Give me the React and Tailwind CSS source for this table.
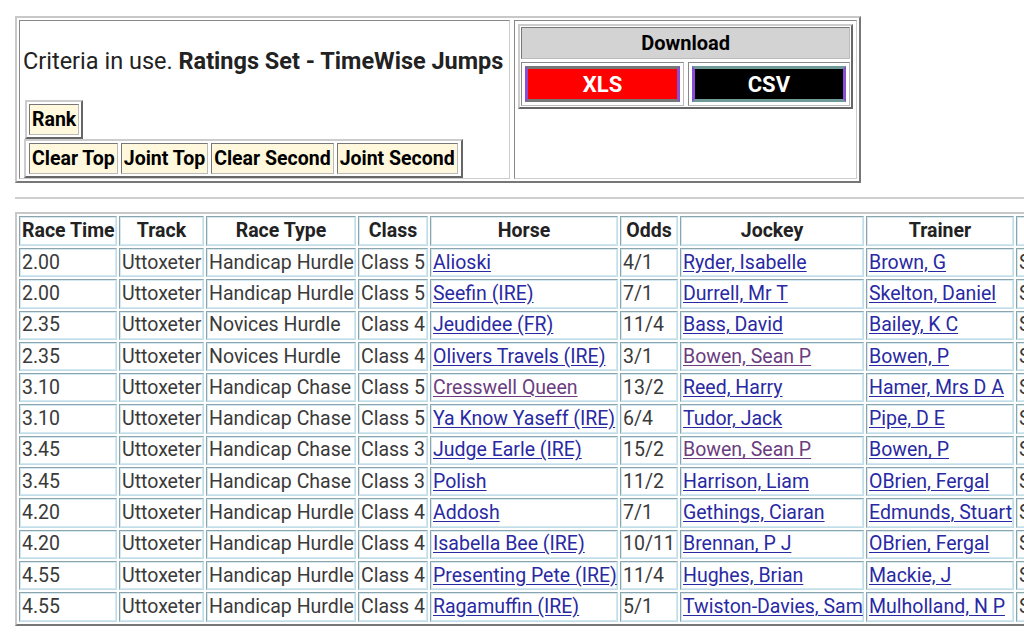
import React from 'react';

const rows = [
  ['2.00', 'Uttoxeter', 'Handicap Hurdle', 'Class 5', 'Alioski', '4/1', 'Ryder, Isabelle', 'Brown, G'],
  ['2.00', 'Uttoxeter', 'Handicap Hurdle', 'Class 5', 'Seefin (IRE)', '7/1', 'Durrell, Mr T', 'Skelton, Daniel'],
  ['2.35', 'Uttoxeter', 'Novices Hurdle', 'Class 4', 'Jeudidee (FR)', '11/4', 'Bass, David', 'Bailey, K C'],
  ['2.35', 'Uttoxeter', 'Novices Hurdle', 'Class 4', 'Olivers Travels (IRE)', '3/1', 'Bowen, Sean P', 'Bowen, P'],
  ['3.10', 'Uttoxeter', 'Handicap Chase', 'Class 5', 'Cresswell Queen', '13/2', 'Reed, Harry', 'Hamer, Mrs D A'],
  ['3.10', 'Uttoxeter', 'Handicap Chase', 'Class 5', 'Ya Know Yaseff (IRE)', '6/4', 'Tudor, Jack', 'Pipe, D E'],
  ['3.45', 'Uttoxeter', 'Handicap Chase', 'Class 3', 'Judge Earle (IRE)', '15/2', 'Bowen, Sean P', 'Bowen, P'],
  ['3.45', 'Uttoxeter', 'Handicap Chase', 'Class 3', 'Polish', '11/2', 'Harrison, Liam', 'OBrien, Fergal'],
  ['4.20', 'Uttoxeter', 'Handicap Hurdle', 'Class 4', 'Addosh', '7/1', 'Gethings, Ciaran', 'Edmunds, Stuart'],
  ['4.20', 'Uttoxeter', 'Handicap Hurdle', 'Class 4', 'Isabella Bee (IRE)', '10/11', 'Brennan, P J', 'OBrien, Fergal'],
  ['4.55', 'Uttoxeter', 'Handicap Hurdle', 'Class 4', 'Presenting Pete (IRE)', '11/4', 'Hughes, Brian', 'Mackie, J'],
  ['4.55', 'Uttoxeter', 'Handicap Hurdle', 'Class 4', 'Ragamuffin (IRE)', '5/1', 'Twiston-Davies, Sam', 'Mulholland, N P'],
];

const visited = ['Bowen, Sean P', 'Cresswell Queen'];

const headers = [
  ['Race Time', 'w-[98px]'],
  ['Track', 'w-[85px]'],
  ['Race Type', 'w-[150px]'],
  ['Class', 'w-[70px]'],
  ['Horse', 'w-[188px]'],
  ['Odds', 'w-[58px]'],
  ['Jockey', 'w-[184px]'],
  ['Trainer', 'w-[148px]'],
  ['Selection', 'w-[120px]'],
];

const cell =
  'border border-t-[#8fa3aa] border-l-[#8fa3aa] border-r-[#c3dde8] border-b-[#c3dde8] shadow-[inset_0_0_0_1px_#d3e9f2]';

const Link = ({ children }) => (
  <a
    href="#"
    className={
      'underline underline-offset-2 ' +
      (visited.includes(children) ? 'text-[#6b3d80]' : 'text-[#2929a3]')
    }
  >
    {children}
  </a>
);

const Btn = ({ children }) => (
  <td className="bg-[#fff8dc] border border-t-[#777] border-l-[#777] border-r-[#bbb] border-b-[#bbb] px-[2px] py-[3px] font-bold text-[19.5px] leading-[23px] text-black whitespace-nowrap">
    {children}
  </td>
);

export default function App() {
  return (
    <div className="w-[1024px] h-[641px] overflow-hidden bg-white font-['Roboto',sans-serif] text-[#222]">
      <div className="pt-4 pl-[15px]">
        <div className="flex gap-[4px] w-[846px] h-[167px] p-[2px] border-2 border-t-[#c8c8c8] border-l-[#c8c8c8] border-r-[#777] border-b-[#777]">
          <div className="w-[492px] h-full border border-t-[#888] border-l-[#888] border-r-[#ccc] border-b-[#ccc] pl-[3px] flex flex-col">
            <p className="mt-[26px] text-[23.5px] leading-[28px] whitespace-nowrap">
              Criteria in use. <b>Ratings Set - TimeWise Jumps</b>
            </p>
            <table className="mt-[25px] ml-[2px] border-separate border-spacing-[2px] border-2 border-t-[#ccc] border-l-[#ccc] border-r-[#666] border-b-[#666] w-fit">
              <tbody>
                <tr>
                  <Btn>Rank</Btn>
                </tr>
              </tbody>
            </table>
            <table className="ml-[1px] border-separate border-spacing-x-[3px] border-spacing-y-[2px] border-2 border-t-[#ccc] border-l-[#ccc] border-r-[#666] border-b-[#666] w-fit">
              <tbody>
                <tr>
                  <Btn>Clear Top</Btn>
                  <Btn>Joint Top</Btn>
                  <Btn>Clear Second</Btn>
                  <Btn>Joint Second</Btn>
                </tr>
              </tbody>
            </table>
          </div>
          <div className="w-[343px] h-full border border-t-[#888] border-l-[#888] border-r-[#ccc] border-b-[#ccc] p-[3px]">
            <div className="border-2 border-t-[#ccc] border-l-[#ccc] border-r-[#666] border-b-[#666] p-[1px] flex flex-col gap-[3px]">
              <div className="h-[32px] bg-[#d3d3d3] border border-t-[#777] border-l-[#777] border-r-[#bbb] border-b-[#bbb] flex items-center justify-center font-bold text-[20px] text-black">
                Download
              </div>
              <div className="flex gap-[4px]">
                <div className="flex-1 h-[44px] border border-t-[#888] border-l-[#888] border-r-[#bbb] border-b-[#bbb] p-[3px]">
                  <div className="h-full bg-[#ff0000] border-[3px] border-t-[#777] border-b-[#777] border-l-[#8a4fd0] border-r-[#8a4fd0] flex items-center justify-center font-bold text-[22px] text-white">
                    XLS
                  </div>
                </div>
                <div className="flex-1 h-[44px] border border-t-[#888] border-l-[#888] border-r-[#bbb] border-b-[#bbb] p-[3px]">
                  <div className="h-full bg-black border-[3px] border-t-[#6f9a98] border-b-[#6f9a98] border-l-[#8a4fd0] border-r-[#8a4fd0] flex items-center justify-center font-bold text-[22px] text-white">
                    CSV
                  </div>
                </div>
              </div>
            </div>
          </div>
        </div>
      </div>

      <div className="mt-[14px] ml-[15px] border-t-2 border-[#cfcfcf]" />

      <div className="mt-[13px] ml-[15px]">
        <table className="table-fixed w-[1125px] border-separate border-spacing-[2px] border-2 border-t-[#c8c8c8] border-l-[#c8c8c8] border-r-[#777] border-b-[#777] text-[19.5px]">
          <thead>
            <tr>
              {headers.map(([h, w]) => (
                <th key={h} className={`${w} ${cell} h-[30px] px-[2px] font-bold text-center text-[#222] leading-[22px] whitespace-nowrap`}>
                  {h}
                </th>
              ))}
            </tr>
          </thead>
          <tbody>
            {rows.map((r, i) => (
              <tr key={i}>
                {r.map((c, j) => (
                  <td key={j} className={`${cell} h-[29.3px] px-[2px] leading-[22px] text-left text-[#3a3a3a] whitespace-nowrap`}>
                    {j >= 6 || j === 4 ? <Link>{c}</Link> : c}
                  </td>
                ))}
                <td className={`${cell} h-[29.3px] px-[2px] leading-[22px] text-[#3a3a3a] whitespace-nowrap`}>Sel</td>
              </tr>
            ))}
          </tbody>
        </table>
      </div>
    </div>
  );
}
